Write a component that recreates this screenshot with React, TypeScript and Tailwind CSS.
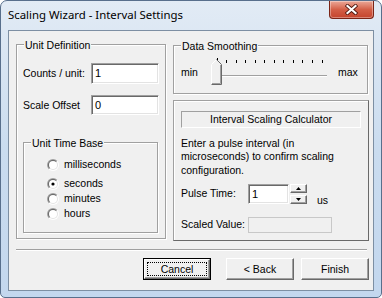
import React from "react";

const etched = "border border-[#a0a0a0] shadow-[inset_1px_1px_0_#ffffff,1px_1px_0_#ffffff]";

function Legend({ children }: { children: React.ReactNode }) {
  return (
    <span className="absolute left-[7px] top-[-6px] bg-[#f0f0f0] px-[1px] leading-[13px] whitespace-nowrap">
      {children}
    </span>
  );
}

function Radio({ checked }: { checked?: boolean }) {
  return (
    <svg width="12" height="12" viewBox="0 0 12 12" className="shrink-0">
      <defs>
        <linearGradient id="rOuter" x1="0" y1="0" x2="1" y2="1">
          <stop offset="0.48" stopColor="#a0a0a0" />
          <stop offset="0.52" stopColor="#ffffff" />
        </linearGradient>
        <linearGradient id="rInner" x1="0" y1="0" x2="1" y2="1">
          <stop offset="0.48" stopColor="#696969" />
          <stop offset="0.52" stopColor="#e3e3e3" />
        </linearGradient>
      </defs>
      <circle cx="6" cy="6" r="6" fill="url(#rOuter)" />
      <circle cx="6" cy="6" r="5" fill="url(#rInner)" />
      <circle cx="6" cy="6" r="4" fill="#ffffff" />
      {checked && <circle cx="6" cy="6" r="1.6" fill="#000000" />}
    </svg>
  );
}

function RadioRow({ label, checked, className }: { label: string; checked?: boolean; className: string }) {
  return (
    <div className={"flex items-center h-[15px] pl-[23px] " + className}>
      <Radio checked={checked} />
      <span className="ml-[5px] leading-[13px]">{label}</span>
    </div>
  );
}

const sunken =
  "bg-white border border-t-[#a0a0a0] border-l-[#a0a0a0] border-r-[#ffffff] border-b-[#ffffff] shadow-[inset_1px_1px_0_#696969,inset_-1px_-1px_0_#e3e3e3]";

const raised =
  "bg-[#f0f0f0] border border-t-[#ffffff] border-l-[#ffffff] border-r-[#696969] border-b-[#696969] shadow-[inset_-1px_-1px_0_#a0a0a0]";

function Slider() {
  const ticks = Array.from({ length: 12 }, (_, i) => 8.5 + i * 9.55);
  return (
    <svg width="120" height="30" viewBox="0 0 120 30" className="shrink-0">
      {ticks.map((x, i) => (
        <line
          key={i}
          x1={Math.round(x) + 0.5}
          x2={Math.round(x) + 0.5}
          y1={i === 0 ? 1 : 3}
          y2={6}
          stroke="#000000"
          strokeWidth="1"
        />
      ))}
      <line x1="7" x2="119" y1="18.5" y2="18.5" stroke="#a0a0a0" />
      <line x1="7" x2="119" y1="19.5" y2="19.5" stroke="#ffffff" />
      <polygon points="3.5,7.5 8.5,2.5 13.5,7.5 13.5,27.5 3.5,27.5" fill="#f0f0f0" stroke="none" />
      <polyline points="3.5,27.5 3.5,7.5 8.5,2.5" fill="none" stroke="#ffffff" />
      <polyline points="8.5,2.5 13.5,7.5 13.5,27.5 3.5,27.5" fill="none" stroke="#696969" />
      <polyline points="12.5,8 12.5,26.5 4,26.5" fill="none" stroke="#a0a0a0" />
    </svg>
  );
}

function Spin() {
  return (
    <div className="flex flex-col ml-[1px] w-[17px] h-[20px] justify-between">
      <div className={"h-[9px] flex items-center justify-center " + raised}>
        <svg width="5" height="3" viewBox="0 0 5 3">
          <polygon points="2.5,0 5,3 0,3" fill="#000" />
        </svg>
      </div>
      <div className={"h-[9px] flex items-center justify-center " + raised}>
        <svg width="5" height="3" viewBox="0 0 5 3">
          <polygon points="0,0 5,0 2.5,3" fill="#000" />
        </svg>
      </div>
    </div>
  );
}

function Btn({ children, className }: { children: React.ReactNode; className: string }) {
  return (
    <div className={"h-[22px] flex items-center justify-center leading-[13px] " + raised + " " + className}>
      {children}
    </div>
  );
}

export default function App() {
  return (
    <div className="w-[382px] h-[298px] flex flex-col rounded-t-[7px] rounded-b-[5px] border border-[#586f8c] bg-gradient-to-b from-[#e2ebf5] via-[#cadcef] to-[#c3d7ee] overflow-hidden font-['Liberation_Sans',Arial,sans-serif] text-[10.5px] text-black">
      {/* title bar */}
      <div className="h-[29px] flex justify-between items-start shrink-0">
        <div className="pl-[7px] pt-[6px] leading-[16px] text-[11.4px] font-['Noto_Sans',sans-serif] text-black">
          Scaling Wizard - Interval Settings
        </div>
        <div className="mr-[7px] w-[45px] h-[18px] rounded-b-[4px] border border-t-0 border-[#7a2416] bg-gradient-to-b from-[#eaa898] via-[#d35f47] to-[#c4432c] shadow-[inset_0_0_0_1px_rgba(255,255,255,0.35)] flex items-center justify-center">
          <svg width="13" height="11" viewBox="0 0 13 11">
            <path d="M2.5 2 L10.5 9 M10.5 2 L2.5 9" stroke="#4a140c" strokeWidth="3.8" strokeLinecap="square" />
            <path d="M2.5 2 L10.5 9 M10.5 2 L2.5 9" stroke="#ffffff" strokeWidth="2.2" strokeLinecap="square" />
          </svg>
        </div>
      </div>

      {/* client */}
      <div className="mx-[7px] flex-1 bg-[#f0f0f0] border border-[#7d8fa3] flex flex-col">
        <div className="flex mt-[13px] ml-[7px]">
          {/* Unit Definition */}
          <div className={"relative w-[150px] h-[195px] shrink-0 flex flex-col " + etched}>
            <Legend>Unit Definition</Legend>
            <div className="flex items-center mt-[18px] pl-[6px]">
              <span className="w-[68px] leading-[13px]">Counts / unit:</span>
              <div className={"w-[68px] h-[21px] flex items-center pl-[3px] text-[11px] " + sunken}>1</div>
            </div>
            <div className="flex items-center mt-[11px] pl-[6px]">
              <span className="w-[68px] leading-[13px]">Scale Offset</span>
              <div className={"w-[68px] h-[20px] flex items-center pl-[3px] text-[11px] " + sunken}>0</div>
            </div>
            <div className={"relative ml-[6px] mt-[27px] w-[135px] h-[91px] flex flex-col " + etched}>
              <Legend>Unit Time Base</Legend>
              <RadioRow label="milliseconds" className="mt-[14px]" />
              <RadioRow label="seconds" checked className="mt-[4px]" />
              <RadioRow label="minutes" className="mt-0" />
              <RadioRow label="hours" className="mt-0" />
            </div>
          </div>

          {/* right column */}
          <div className="ml-[7px] flex flex-col">
            <div className={"relative mt-[1px] w-[195px] h-[49px] flex items-start " + etched}>
              <Legend>Data Smoothing</Legend>
              <div className="flex items-center mt-[11px] pl-[7px]">
                <span className="w-[27px] leading-[13px]">min</span>
                <Slider />
                <span className="ml-[10px] leading-[13px]">max</span>
              </div>
            </div>

            <div className="mt-[6px] w-[196px] h-[141px] border border-[#a0a0a0] border-r-[#696969] border-b-[#696969] shadow-[inset_1px_1px_0_#ffffff] flex flex-col pl-[7px]">
              <div className="mt-[10px] w-[180px] h-[17px] border border-t-[#a0a0a0] border-l-[#a0a0a0] border-r-[#ffffff] border-b-[#ffffff] flex items-center justify-center leading-[13px]">
                Interval Scaling Calculator
              </div>
              <div className="mt-[9px] leading-[13.3px]">
                Enter a pulse interval (in
                <br />
                microseconds) to confirm scaling
                <br />
                configuration.
              </div>
              <div className="flex items-center mt-[7px] h-[20px]">
                <span className="w-[67px] leading-[13px]">Pulse Time:</span>
                <div className={"w-[41px] h-[20px] flex items-center pl-[3px] text-[11px] " + sunken}>1</div>
                <Spin />
                <span className="ml-[10px] self-end mb-[-3px] leading-[13px]">us</span>
              </div>
              <div className="flex items-center mt-[13px]">
                <span className="w-[67px] leading-[13px]">Scaled Value:</span>
                <div className="w-[84px] h-[16px] border border-[#c8c8c8] bg-[#f0f0f0]" />
              </div>
            </div>
          </div>
        </div>

        {/* separator */}
        <div className="ml-[7px] mt-[8px] w-[351px] h-[2px] border-t border-t-[#a0a0a0] border-b border-b-[#ffffff]" />

        {/* buttons */}
        <div className="flex justify-end mt-[7px] pr-[4px]">
          <div className="w-[68px] h-[22px] border border-black flex">
            <div className={"relative flex-1 flex items-center justify-center leading-[13px] " + raised}>
              Cancel
              <div className="absolute inset-[2px] border border-dotted border-black" />
            </div>
          </div>
          <Btn className="w-[68px] ml-[15px]">&lt; Back</Btn>
          <Btn className="w-[68px] ml-[7px]">Finish</Btn>
        </div>
      </div>
      <div className="h-[6px] shrink-0" />
    </div>
  );
}
